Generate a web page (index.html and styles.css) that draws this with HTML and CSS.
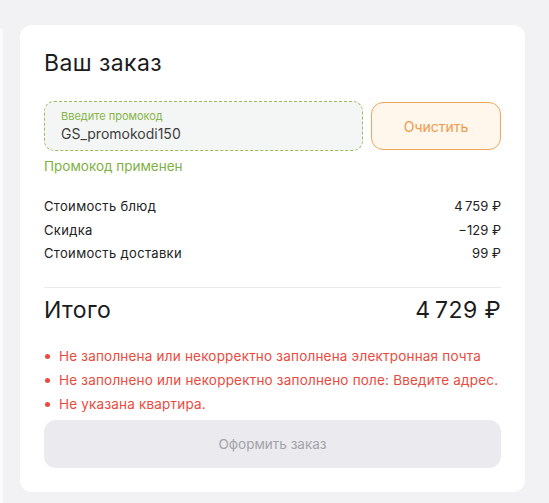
FILE: index.html
```html
<!DOCTYPE html>
<html lang="ru">
<head>
<meta charset="utf-8">
<title>Ваш заказ</title>
<link rel="stylesheet" href="styles.css">
</head>
<body>
<div class="page">
  <div class="side"></div>
  <section class="card">
    <h2 class="title">Ваш заказ</h2>
    <div class="promo">
      <label class="promo-field">
        <span class="promo-label">Введите промокод</span>
        <span class="promo-value">GS_promokodi150</span>
      </label>
      <button class="btn-clear" type="button">Очистить</button>
    </div>
    <div class="promo-ok">Промокод применен</div>
    <div class="rows">
      <div class="row"><span class="row-name">Стоимость блюд</span><span>4&#8201;759 ₽</span></div>
      <div class="row"><span class="row-name">Скидка</span><span>−129 ₽</span></div>
      <div class="row"><span class="row-name">Стоимость доставки</span><span>99 ₽</span></div>
    </div>
    <div class="total"><span>Итого</span><span>4&#8201;729 ₽</span></div>
    <ul class="errors">
      <li>Не заполнена или некорректно заполнена электронная почта</li>
      <li>Не заполнено или некорректно заполнено поле: Введите адрес.</li>
      <li>Не указана квартира.</li>
    </ul>
    <button class="btn-order" type="button" disabled>Оформить заказ</button>
  </section>
</div>
</body>
</html>
```

FILE: styles.css
```css
* { box-sizing: border-box; }
html, body { margin: 0; padding: 0; }
body {
  background: #f2f2f4;
  font-family: Inter, "Noto Sans", Roboto, sans-serif;
  color: #1f1f1f;
  width: 549px;
  height: 503px;
  overflow: hidden;
}
.page {
  display: flex;
  gap: 17px;
  align-items: flex-start;
}
.side {
  width: 3px;
  height: 480px;
  margin-top: 28px;
  background: #fbfbfc;
  border-top-right-radius: 3px;
}
.card {
  width: 505px;
  height: 467px;
  margin-top: 25px;
  background: #fff;
  border-radius: 12px;
  padding: 24px 24px 0 24px;
  display: flex;
  flex-direction: column;
}
.title {
  margin: 0;
  font-size: 23px;
  line-height: 28px;
  font-weight: 400;
  letter-spacing: 0.4px;
  color: #1c1c1c;
}
.promo {
  margin-top: 24px;
  display: grid;
  grid-template-columns: 1fr 130px;
  gap: 8px;
  align-items: center;
}
.promo-field {
  height: 50px;
  border: 1px dashed #9cbd5e;
  border-radius: 10px;
  background: #f4f5f5;
  padding: 8px 16px 0 16px;
  display: flex;
  flex-direction: column;
}
.promo-label {
  font-size: 11px;
  line-height: 13px;
  color: #86b548;
}
.promo-value {
  font-size: 14px;
  line-height: 20px;
  color: #3d3d3d;
  margin-top: 1px;
}
.btn-clear {
  height: 48px;
  border: 1px solid #f0a55c;
  background: #fff6ec;
  border-radius: 12px;
  color: #f0994a;
  font-family: inherit;
  font-size: 14px;
  padding: 0;
}
.promo-ok {
  margin-top: 5px;
  font-size: 13.5px;
  line-height: 20px;
  color: #7fb046;
}
.rows {
  margin-top: 19px;
  padding-bottom: 21px;
  border-bottom: 1px solid #e9e9eb;
}
.row {
  display: flex;
  justify-content: space-between;
  font-size: 13px;
  line-height: 23.5px;
  color: #222;
}
.row-name {
  letter-spacing: 0.33px;
}
.total {
  margin-top: 8px;
  display: flex;
  justify-content: space-between;
  font-size: 23px;
  line-height: 28px;
  letter-spacing: 0.4px;
  color: #1c1c1c;
}
.errors {
  list-style: none;
  margin: 20px 0 0 0;
  padding: 0;
}
.errors li {
  position: relative;
  padding-left: 15px;
  font-size: 13.5px;
  line-height: 24px;
  letter-spacing: 0.2px;
  color: #ea4a3e;
  white-space: nowrap;
}
.errors li::before {
  content: "";
  position: absolute;
  left: 1px;
  top: 10px;
  width: 5px;
  height: 5px;
  border-radius: 50%;
  background: #ea4a3e;
}
.btn-order {
  margin-top: 4px;
  height: 48px;
  border: none;
  border-radius: 12px;
  background: #eaeaef;
  color: #a3a3a8;
  font-family: inherit;
  font-size: 13.5px;
  padding: 0;
}
```
